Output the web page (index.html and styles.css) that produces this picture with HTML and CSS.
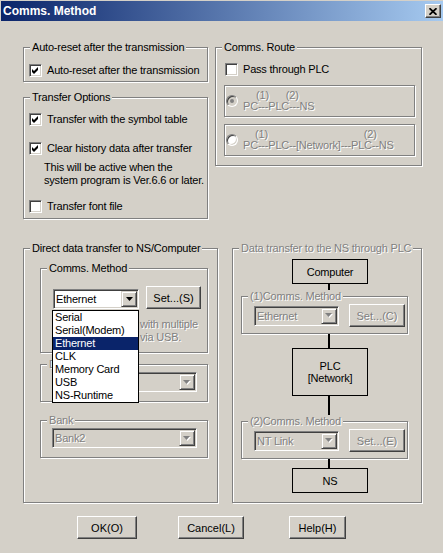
FILE: index.html
```html
<!DOCTYPE html>
<html lang="en">
<head>
    <meta charset="UTF-8">
    <title>Comms. Method</title>
    <link rel="stylesheet" href="styles.css">
</head>
<body>
<div class="dialog">
    <div class="titlebar">
        <span class="title">Comms. Method</span>
        <span class="close"><svg width="8" height="7" viewBox="0 0 8 7"><path d="M0.5 0.2 L7.5 6.8 M7.5 0.2 L0.5 6.8" stroke="#000" stroke-width="1.7"/></svg></span>
    </div>

    <div class="content">
        <div class="top-row">
            <div>
                <div class="group g-auto">
                    <div class="group-title">Auto-reset after the transmission</div>
                    <div class="check-row"><span class="check"><svg width="7" height="7" viewBox="0 0 7 7"><polygon points="0,2 2,4 6,0 6,3 2,7 0,5"/></svg></span>Auto-reset after the transmission</div>
                </div>

                <div class="group g-transfer">
                    <div class="group-title">Transfer Options</div>
                    <div class="check-row row-symbol"><span class="check"><svg width="7" height="7" viewBox="0 0 7 7"><polygon points="0,2 2,4 6,0 6,3 2,7 0,5"/></svg></span>Transfer with the symbol table</div>
                    <div class="check-row row-history"><span class="check"><svg width="7" height="7" viewBox="0 0 7 7"><polygon points="0,2 2,4 6,0 6,3 2,7 0,5"/></svg></span>Clear history data after transfer</div>
                    <div class="note">This will be active when the<br>system program is Ver.6.6 or later.</div>
                    <div class="check-row row-font"><span class="check"></span>Transfer font file</div>
                </div>
            </div>

            <div class="group g-route">
                <div class="group-title">Comms. Route</div>
                <div class="check-row row-pass"><span class="check"></span>Pass through PLC</div>
                <div class="route-box">
                    <span class="radio radio-off"><span class="dot"></span></span>
                    <div class="route-text dim">
                        <div><span class="mark-a1">(1)</span><span class="mark-a2">(2)</span></div>
                        <div>PC---PLC---NS</div>
                    </div>
                </div>
                <div class="route-box">
                    <span class="radio"></span>
                    <div class="route-text dim">
                        <div><span class="mark-b1">(1)</span><span class="mark-b2">(2)</span></div>
                        <div>PC---PLC--[Network]---PLC--NS</div>
                    </div>
                </div>
            </div>
        </div>

        <div class="bottom-row">
            <div class="group g-direct">
                <div class="group-title">Direct data transfer to NS/Computer</div>

                <div class="group g-comms">
                    <div class="group-title">Comms. Method</div>
                    <div class="combo-row">
                        <div class="combo-wrap">
                            <div class="combo combo-method">
                                <span class="combo-value">Ethernet</span>
                                <span class="combo-arrow"><svg width="7" height="4" viewBox="0 0 7 4"><polygon points="0,0 7,0 3.5,4"/></svg></span>
                            </div>
                            <ul class="drop-list">
                                <li>Serial</li>
                                <li>Serial(Modem)</li>
                                <li class="selected">Ethernet</li>
                                <li>CLK</li>
                                <li>Memory Card</li>
                                <li>USB</li>
                                <li>NS-Runtime</li>
                            </ul>
                        </div>
                        <button class="btn btn-set">Set...(S)</button>
                    </div>
                    <div class="usb-note dim">with multiple<br>via USB.</div>
                </div>

                <div class="group g-dest">
                    <div class="group-title dim">Destination</div>
                    <div class="combo combo-wide off">
                        <span class="combo-value"></span>
                        <span class="combo-arrow"><svg width="8" height="5" viewBox="0 0 8 5"><polygon points="1,1 8,1 4.5,5" fill="#fff"/><polygon points="0,0 7,0 3.5,4" fill="#808080"/></svg></span>
                    </div>
                </div>

                <div class="group g-bank">
                    <div class="group-title dim">Bank</div>
                    <div class="combo combo-wide off">
                        <span class="combo-value dim">Bank2</span>
                        <span class="combo-arrow"><svg width="8" height="5" viewBox="0 0 8 5"><polygon points="1,1 8,1 4.5,5" fill="#fff"/><polygon points="0,0 7,0 3.5,4" fill="#808080"/></svg></span>
                    </div>
                </div>
            </div>

            <div class="group g-plc">
                <div class="group-title dim">Data transfer to the NS through PLC</div>
                <div class="node node-pc">Computer</div>
                <div class="wire wire-1"></div>

                <div class="group sub-link">
                    <div class="group-title dim">(1)Comms. Method</div>
                    <div class="link-row">
                        <div class="combo combo-link off">
                            <span class="combo-value dim">Ethernet</span>
                            <span class="combo-arrow"><svg width="8" height="5" viewBox="0 0 8 5"><polygon points="1,1 8,1 4.5,5" fill="#fff"/><polygon points="0,0 7,0 3.5,4" fill="#808080"/></svg></span>
                        </div>
                        <button class="btn btn-link dim">Set...(C)</button>
                    </div>
                </div>

                <div class="wire wire-2"></div>
                <div class="node node-plc"><span>PLC</span><span>[Network]</span></div>
                <div class="wire wire-3"></div>

                <div class="group sub-link">
                    <div class="group-title dim">(2)Comms. Method</div>
                    <div class="link-row">
                        <div class="combo combo-link off">
                            <span class="combo-value dim">NT Link</span>
                            <span class="combo-arrow"><svg width="8" height="5" viewBox="0 0 8 5"><polygon points="1,1 8,1 4.5,5" fill="#fff"/><polygon points="0,0 7,0 3.5,4" fill="#808080"/></svg></span>
                        </div>
                        <button class="btn btn-link dim">Set...(E)</button>
                    </div>
                </div>

                <div class="wire wire-4"></div>
                <div class="node node-ns">NS</div>
            </div>
        </div>

        <div class="buttons">
            <button class="btn btn-ok">OK(O)</button>
            <button class="btn btn-cancel">Cancel(L)</button>
            <button class="btn btn-help">Help(H)</button>
        </div>
    </div>
</div>
</body>
</html>
```

FILE: styles.css
```css
body {
    margin: 0;
    background: #d4d0c8;
    font-family: "Liberation Sans", Arial, sans-serif;
    font-size: 11px;
    letter-spacing: -0.2px;
    color: #000;
}
.dialog {
    width: 443px;
    height: 553px;
    overflow: hidden;
}

/* title bar */
.titlebar {
    display: flex;
    align-items: center;
    height: 20px;
    margin: 1px 0 0 1px;
    padding-left: 2px;
    background: linear-gradient(to right, #0a246a, #a6caf0);
}
.title {
    color: #fff;
    font-weight: bold;
    font-size: 12px;
    letter-spacing: 0;
}
.close {
    margin-left: auto;
    margin-right: 2px;
    width: 16px;
    height: 14px;
    box-sizing: border-box;
    display: flex;
    align-items: center;
    justify-content: center;
    background: #d4d0c8;
    border: 1px solid;
    border-color: #fff #404040 #404040 #fff;
    box-shadow: inset -1px -1px #808080;
}

.content {
    padding: 26px 0 0 23px;
}
.top-row {
    display: grid;
    grid-template-columns: 185px 207px;
    column-gap: 7px;
    align-items: start;
}
.bottom-row {
    display: grid;
    grid-template-columns: 195px 190px;
    column-gap: 14px;
    margin-top: 29px;
    align-items: start;
}

/* etched group box */
.group {
    --pad: 0px;
    padding-left: var(--pad);
    border: 1px solid #808080;
    box-shadow: 1px 1px 0 #fff, inset 1px 1px 0 #fff;
}
.group-title {
    width: fit-content;
    margin: -7px 0 0 calc(6px - var(--pad));
    padding: 0 2px;
    line-height: 13px;
    background: #d4d0c8;
}
.dim {
    color: #808080;
    text-shadow: 1px 1px 0 #fff;
}

/* checkbox + radio */
.check-row {
    display: flex;
    align-items: center;
    gap: 5px;
    height: 13px;
    line-height: 11px;
}
.check, .radio {
    box-sizing: border-box;
    flex: none;
    display: flex;
    align-items: center;
    justify-content: center;
    background: #fff;
    border: 1px solid;
    border-color: #808080 #fff #fff #808080;
    box-shadow: inset 1px 1px #404040, inset -1px -1px #d4d0c8;
}
.check {
    width: 13px;
    height: 13px;
}
.radio {
    width: 12px;
    height: 12px;
    border-radius: 50%;
}
.radio-off {
    background: #d4d0c8;
}
.dot {
    width: 4px;
    height: 4px;
    border-radius: 50%;
    background: #808080;
}

.g-auto {
    --pad: 5px;
    padding-bottom: 4px;
}
.g-auto .check-row {
    margin-top: 10px;
}
.g-transfer {
    --pad: 5px;
    margin-top: 15px;
    padding-bottom: 5px;
}
.row-symbol { margin-top: 9px; }
.row-history { margin-top: 16px; }
.note {
    margin: 6px 0 0 15px;
    line-height: 13px;
}
.row-font { margin-top: 13px; }

.g-route {
    --pad: 8px;
    padding-right: 6px;
    padding-bottom: 9px;
}
.row-pass {
    margin: 9px 0 0 1px;
}
.route-box {
    display: flex;
    align-items: center;
    gap: 5px;
    margin-top: 9px;
    padding: 4px 0 4px 1px;
    border: 1px solid #808080;
    box-shadow: 1px 1px 0 #fff, inset 1px 1px 0 #fff;
}
.route-box + .route-box {
    margin-top: 7px;
}
.route-text {
    line-height: 11px;
}
.mark-a1 { margin-left: 13px; }
.mark-a2 { margin-left: 17px; }
.mark-b1 { margin-left: 12px; }
.mark-b2 { margin-left: 96px; }

/* combo boxes */
.combo {
    box-sizing: border-box;
    height: 20px;
    display: flex;
    padding: 1px;
    background: #fff;
    border: 1px solid;
    border-color: #808080 #fff #fff #808080;
    box-shadow: inset 1px 1px #404040, inset -1px -1px #d4d0c8;
}
.combo.off {
    background: #d4d0c8;
}
.combo-value {
    flex: 1;
    line-height: 16px;
    padding-left: 1px;
    white-space: nowrap;
}
.combo-arrow {
    box-sizing: border-box;
    width: 16px;
    height: 16px;
    display: flex;
    align-items: center;
    justify-content: center;
    background: #d4d0c8;
    border: 1px solid;
    border-color: #d4d0c8 #404040 #404040 #d4d0c8;
    box-shadow: inset 1px 1px #fff, inset -1px -1px #808080;
}

/* push buttons */
.btn {
    box-sizing: border-box;
    height: 23px;
    padding: 0;
    font: inherit;
    color: #000;
    background: #d4d0c8;
    border: 1px solid;
    border-color: #fff #404040 #404040 #fff;
    box-shadow: inset -1px -1px #808080;
}
.btn.dim {
    color: #808080;
}

/* direct transfer */
.g-direct {
    --pad: 16px;
    padding-right: 9px;
    padding-bottom: 44px;
}
.g-comms {
    --pad: 12px;
    margin-top: 13px;
    padding-bottom: 8px;
}
.combo-row {
    display: flex;
    align-items: flex-end;
    gap: 7px;
    margin-top: 11px;
}
.combo-wrap {
    position: relative;
}
.combo-method {
    width: 86px;
}
.btn-set {
    width: 55px;
}
.drop-list {
    position: absolute;
    z-index: 1;
    top: calc(100% + 1px);
    left: -1px;
    width: 87px;
    box-sizing: border-box;
    margin: 0;
    padding: 0;
    list-style: none;
    background: #fff;
    border: 1px solid #000;
}
.drop-list li {
    line-height: 13px;
    padding-left: 2px;
}
.drop-list .selected {
    background: #0a246a;
    color: #fff;
}
.usb-note {
    margin: 9px 0 0 87px;
    line-height: 13px;
}
.g-dest, .g-bank {
    --pad: 11px;
    padding-bottom: 9px;
}
.g-dest {
    margin-top: 11px;
}
.g-bank {
    margin-top: 18px;
}
.combo-wide {
    width: 145px;
    margin-top: 1px;
}

/* through PLC diagram */
.g-plc {
    display: flex;
    flex-direction: column;
    align-items: flex-start;
    padding-bottom: 9px;
}
.node {
    box-sizing: border-box;
    width: 76px;
    margin-left: 59px;
    display: flex;
    flex-direction: column;
    align-items: center;
    justify-content: center;
    line-height: 12px;
    border: 1px solid #000;
}
.node-pc {
    height: 25px;
    margin-top: 4px;
}
.node-plc { height: 48px; }
.node-ns { height: 25px; }
.wire {
    width: 2px;
    margin-left: 95px;
    background: #000;
}
.wire-1 { height: 12px; }
.wire-2 { height: 14px; }
.wire-3 { height: 25px; }
.wire-4 { height: 9px; }
.sub-link {
    --pad: 12px;
    box-sizing: border-box;
    width: 167px;
    margin-left: 8px;
    padding-bottom: 6px;
}
.link-row {
    display: flex;
    align-items: center;
    gap: 10px;
    margin-top: 1px;
}
.combo-link { width: 85px; }
.btn-link { width: 56px; }

/* dialog buttons */
.buttons {
    display: flex;
    margin-top: 13px;
}
.btn-ok {
    width: 60px;
    margin-left: 54px;
}
.btn-cancel {
    width: 66px;
    margin-left: 41px;
}
.btn-help {
    width: 57px;
    margin-left: 45px;
}
```
